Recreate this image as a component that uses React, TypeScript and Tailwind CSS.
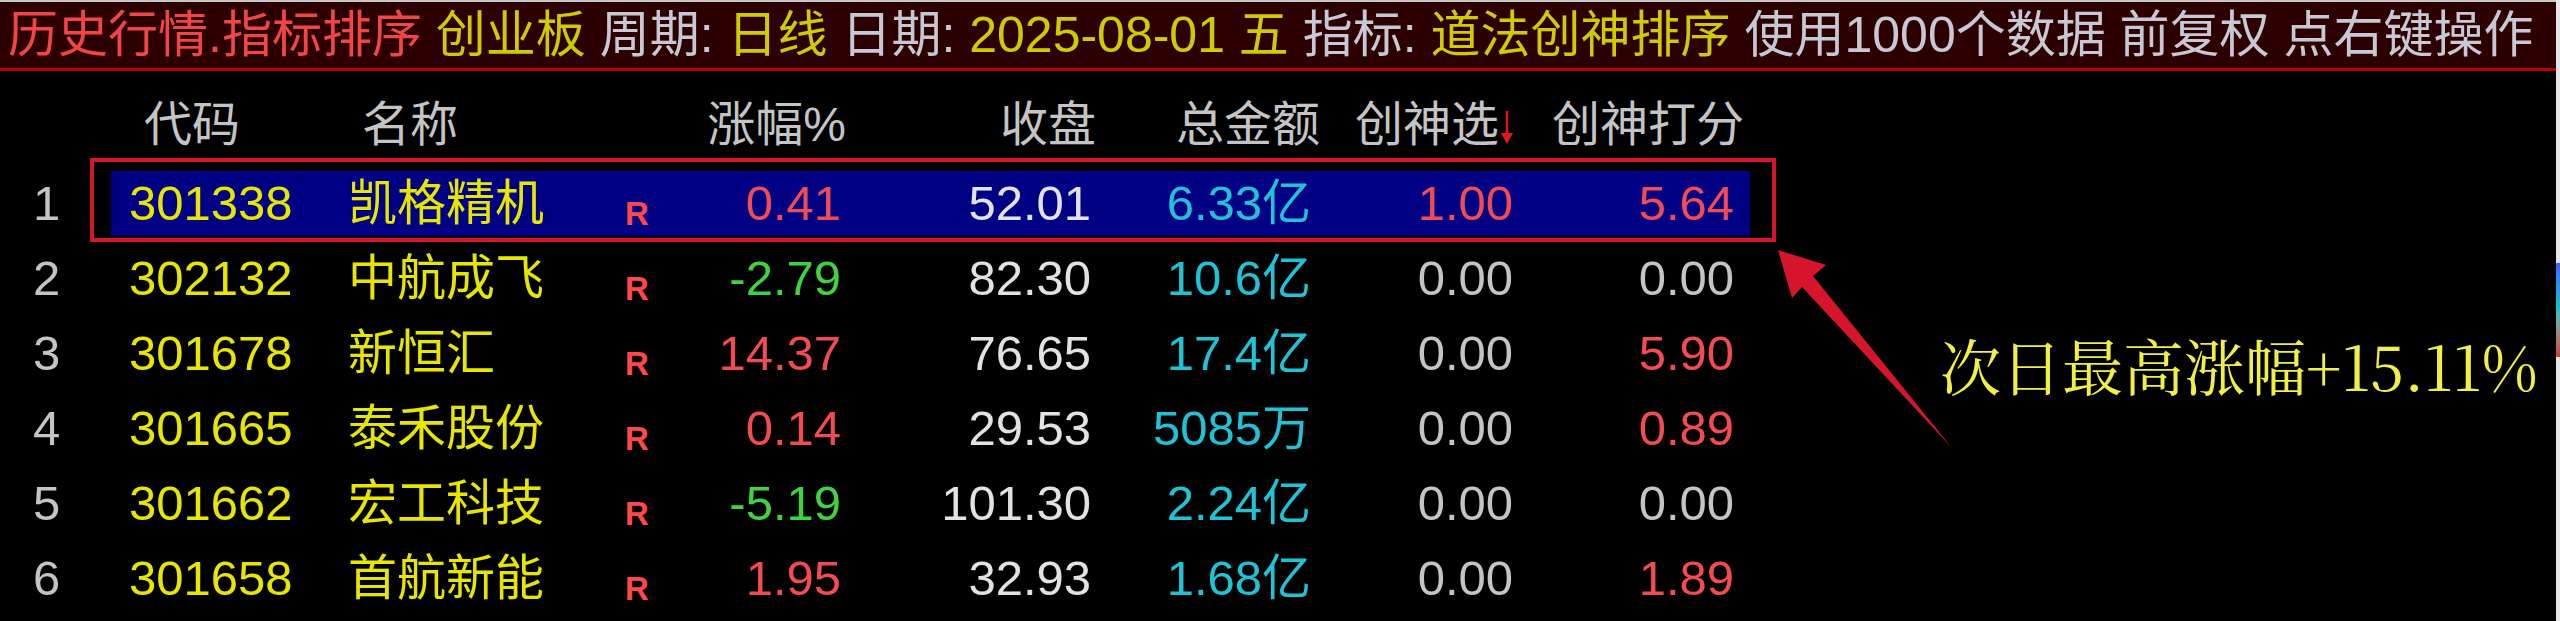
import React from 'react'

interface Row {
  idx: number
  code: string
  name: string
  chg: string
  close: string
  amt: string
  sel: string
  score: string
}

const rows: Row[] = [
  { idx: 1, code: '301338', name: '凯格精机', chg: '0.41', close: '52.01', amt: '6.33亿', sel: '1.00', score: '5.64' },
  { idx: 2, code: '302132', name: '中航成飞', chg: '-2.79', close: '82.30', amt: '10.6亿', sel: '0.00', score: '0.00' },
  { idx: 3, code: '301678', name: '新恒汇', chg: '14.37', close: '76.65', amt: '17.4亿', sel: '0.00', score: '5.90' },
  { idx: 4, code: '301665', name: '泰禾股份', chg: '0.14', close: '29.53', amt: '5085万', sel: '0.00', score: '0.89' },
  { idx: 5, code: '301662', name: '宏工科技', chg: '-5.19', close: '101.30', amt: '2.24亿', sel: '0.00', score: '0.00' },
  { idx: 6, code: '301658', name: '首航新能', chg: '1.95', close: '32.93', amt: '1.68亿', sel: '0.00', score: '1.89' },
]

// red up, green down, gray flat
const tone = (v: string) => {
  const n = parseFloat(v)
  if (n > 0) return 'text-[#f24b52]'
  if (n < 0) return 'text-[#3fd43f]'
  return 'text-[#c4c4c4]'
}

const FONT = "font-['Liberation_Sans','Noto_Sans_CJK_SC',sans-serif]"

function TopBar() {
  return (
    <div className="flex h-[69px] items-center whitespace-pre border-b-[3px] border-[#b80000] bg-[#2c0000] pl-[8px] text-[50px] leading-none">
      <span className="text-[#f04646]">历史行情.指标排序 </span>
      <span className="text-[#cccc00]">创业板 </span>
      <span className="text-[#c8c8d4]">周期: </span>
      <span className="text-[#cccc00]">日线 </span>
      <span className="text-[#c8c8d4]">日期: </span>
      <span className="text-[#cccc00]">2025-08-01 五 </span>
      <span className="text-[#c8c8d4]">指标: </span>
      <span className="text-[#cccc00]">道法创神排序 </span>
      <span className="text-[#c8c8d4]">使用1000个数据 前复权 点右键操作</span>
    </div>
  )
}

function HeaderRow() {
  return (
    <div className="flex h-[95px] items-center pt-[12px] text-[48px] leading-none text-[#c4c4c4]">
      <div className="w-[111px]" />
      <div className="w-[237px] pl-[33px]">代码</div>
      <div className="w-[277px] pl-[14px]">名称</div>
      <div className="w-[75px]" />
      <div className="w-[146px] text-right">涨幅%</div>
      <div className="w-[250px] text-right">收盘</div>
      <div className="w-[224px] text-right">总金额</div>
      <div className="flex w-[194px] items-center justify-end">
        <span>创神选</span>
        <svg width="14" height="34" viewBox="0 0 14 34" className="ml-[1px] mt-[6px]">
          <line x1="7" y1="0" x2="7" y2="30" stroke="#e01818" strokeWidth="2.5" />
          <path d="M1 22 L7 33 L13 22 Z" fill="#e01818" />
        </svg>
      </div>
      <div className="w-[230px] text-right">创神打分</div>
    </div>
  )
}

function DataRow({ r, active }: { r: Row; active: boolean }) {
  return (
    <div className="flex h-[75px] items-center text-[49px] leading-none">
      <div className="w-[111px] pl-[33px] text-[#c4c4c4]">{r.idx}</div>
      <div className={`flex h-[65px] w-[1639px] items-center ${active ? 'bg-[#000084]' : ''}`}>
        <div className="w-[237px] pl-[18px] text-[#e6e600]">{r.code}</div>
        <div className="w-[277px] text-[#e6e600]">{r.name}</div>
        <div className="w-[75px] pt-[20px] text-[33px] font-bold text-[#ff4848]">R</div>
        <div className={`w-[141px] text-right ${tone(r.chg)}`}>{r.chg}</div>
        <div className="w-[250px] text-right text-[#e2e2e2]">{r.close}</div>
        <div className="w-[220px] text-right text-[#1fc3d6]">{r.amt}</div>
        <div className={`w-[202px] text-right ${tone(r.sel)}`}>{r.sel}</div>
        <div className={`w-[221px] text-right ${tone(r.score)}`}>{r.score}</div>
      </div>
    </div>
  )
}

export default function App() {
  return (
    <div className={`flex h-[621px] w-[2560px] overflow-hidden bg-black ${FONT}`}>
      <div className="relative flex w-[2556px] flex-col border-t-2 border-[#c8c8c8]">
        <TopBar />
        <HeaderRow />
        {rows.map((r) => (
          <DataRow key={r.code} r={r} active={r.idx === 1} />
        ))}

        {/* annotation: red frame, arrow, note */}
        <div className="absolute left-[90px] top-[156px] h-[84px] w-[1686px] border-4 border-[#d5152b]" />
        <svg className="absolute left-0 top-0" width="2556" height="621" viewBox="0 0 2556 621">
          <path
            d="M1778 248 L1826 263 L1813 274 L1952 446 L1802 285 L1792 296 Z"
            fill="#d5152b"
          />
        </svg>
        <div className="absolute left-[1940px] top-[332px] font-['Noto_Serif_CJK_SC','Liberation_Serif','Noto_Sans_CJK_SC',serif] text-[61px] leading-none text-[#f0f044]">
          次日最高涨幅+15.11%
        </div>
      </div>
      <div className="flex w-[4px] flex-col bg-[#e6e6e6]">
        <div className="mt-[263px] h-[94px] w-full bg-gradient-to-b from-[#4060ff] via-[#20c0c0] to-[#c04040]" />
      </div>
    </div>
  )
}
